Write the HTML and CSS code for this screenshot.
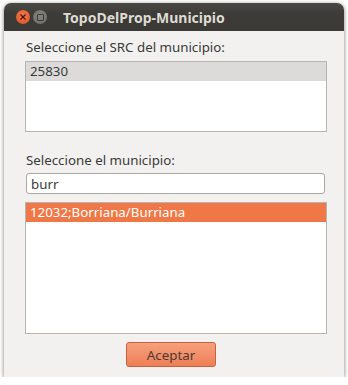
FILE: index.html
```html
<!DOCTYPE html>
<html lang="es">
  <head>
    <meta charset="UTF-8">
    <title>TopoDelProp-Municipio</title>
    <link rel="stylesheet" href="styles.css">
  </head>
  <body>
    <div class="window">
      <div class="titlebar">
        <span class="btn-close">
          <svg width="8" height="8" viewBox="0 0 8 8"><path d="M1.5 1.5 L6.5 6.5 M6.5 1.5 L1.5 6.5" stroke="#4a1a0c" stroke-width="1.3"/></svg>
        </span>
        <span class="btn-min"><span class="min-box"></span></span>
        <span class="title">TopoDelProp-Municipio</span>
      </div>
      <div class="content">
        <p class="label">Seleccione el SRC del municipio:</p>
        <div class="list list-src">
          <div class="row row-grey">25830</div>
        </div>
        <p class="label label2">Seleccione el municipio:</p>
        <input type="text" class="search" value="burr" />
        <div class="list list-mun">
          <div class="row row-sel">12032;Borriana/Burriana</div>
        </div>
        <div class="actions">
          <button class="accept">Aceptar</button>
        </div>
      </div>
    </div>
  </body>
</html>
```

FILE: styles.css
```css
body {
  margin: 0;
  background: #ffffff;
  font-family: 'Noto Sans', sans-serif;
  font-size: 13px;
  color: #3a3a3a;
}

.window {
  margin: 3px 4px 0 4px;
  width: 340px;
  height: 374px;
  border-radius: 7px 7px 0 0;
  background: #f2f1f0;
  box-shadow: 0 1px 4px rgba(0, 0, 0, 0.55);
  overflow: hidden;
  display: flex;
  flex-direction: column;
}

.titlebar {
  height: 28px;
  background: linear-gradient(#4a4944, #3c3b37 40%, #3a3935);
  display: flex;
  align-items: center;
  padding-left: 12px;
  flex-shrink: 0;
}

.btn-close {
  width: 14px;
  height: 14px;
  border-radius: 50%;
  background: radial-gradient(circle at 50% 40%, #f47a55, #e35b2e 70%, #c84a22);
  display: flex;
  align-items: center;
  justify-content: center;
}

.btn-min {
  width: 14px;
  height: 14px;
  border-radius: 50%;
  background: radial-gradient(circle at 50% 40%, #86847e, #6c6a65);
  margin-left: 3px;
  display: flex;
  align-items: center;
  justify-content: center;
}

.min-box {
  width: 5px;
  height: 5px;
  border: 1px solid #3c3b37;
  border-radius: 1px;
}

.title {
  margin-left: 16px;
  color: #dfdbd2;
  font-weight: bold;
  font-size: 14px;
}

.content {
  padding: 6px 17px 0 21px;
  display: flex;
  flex-direction: column;
}

.label {
  margin: 0 0 4px 1px;
  height: 20px;
  line-height: 20px;
  font-size: 13.3px;
}

.label2 {
  margin-top: 18px;
}

.list {
  background: #ffffff;
  border: 1px solid #b6b5b2;
  width: 300px;
}

.list-src {
  height: 69px;
}

.list-mun {
  height: 130px;
  margin-top: 8px;
}

.row {
  height: 19px;
  line-height: 19px;
  padding-left: 4px;
  font-size: 13.3px;
}

.row-grey {
  background: #dcdbd9;
}

.row-sel {
  background: #f07746;
  color: #ffffff;
}

.search {
  margin: -1px 0 0 1px;
  width: 299px;
  height: 21px;
  box-sizing: border-box;
  border: 1px solid #a9a8a4;
  border-radius: 3px;
  padding: 0 4px;
  font-family: 'Noto Sans', sans-serif;
  font-size: 13.3px;
  color: #3a3a3a;
  background: #ffffff;
}

.actions {
  display: flex;
  justify-content: center;
  margin-top: 8px;
  padding-right: 10px;
}

.accept {
  width: 90px;
  height: 25px;
  border: 1px solid #c4623c;
  border-radius: 3px;
  background: linear-gradient(#f7a07d, #ee7f56);
  color: #4b3a33;
  font-family: 'Noto Sans', sans-serif;
  font-size: 13.3px;
  padding: 0;
}
```
